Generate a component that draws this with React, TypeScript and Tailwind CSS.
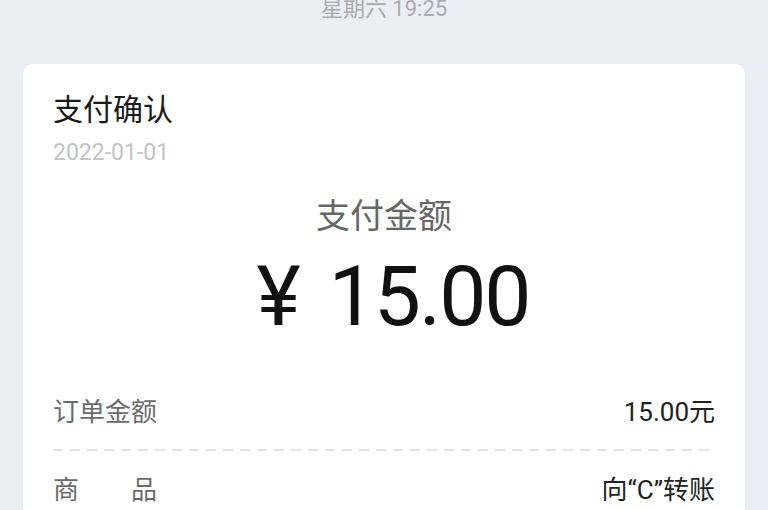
const cjk = '"Roboto", "Noto Sans CJK SC", sans-serif';

export default function App() {
  return (
    <div className="h-[510px] w-[768px] overflow-hidden bg-[#eceef5]" style={{ fontFamily: cjk }}>
      <div className="-mt-[4px] text-center text-[22px] leading-[26px] text-[#a9abb1]">星期六 19:25</div>
      <div className="mx-[23px] mt-[42px] rounded-[10px] bg-white px-[30px] pt-[26px] pb-[40px]">
        <h1 className="text-[30px] leading-[40px] text-[#1a1a1a]">支付确认</h1>
        <p className="mt-[8px] text-[23px] leading-[30px] text-[#c3c3c3]">2022-01-01</p>
        <div className="mt-[26px] text-center text-[34px] leading-[44px] text-[#666666]">支付金额</div>
        <div className="mt-[17px] flex justify-center pl-[18px] text-[84px] leading-[84px] text-[#111111]">
          <span>¥</span>
          <span className="ml-[28px] tracking-[-2px]">15.00</span>
        </div>
        <div className="mt-[55px] flex items-center justify-between text-[26px] leading-[36px]">
          <span className="text-[#6b6b6b]">订单金额</span>
          <span className="text-[#222222]">15.00元</span>
        </div>
        <div className="mt-[19px] h-[2px] bg-[repeating-linear-gradient(to_right,#e2e2e2_0_10px,transparent_10px_17px)]" />
        <div className="mt-[21px] flex items-center justify-between text-[26px] leading-[36px]">
          <span className="text-[#6b6b6b]">商<span className="inline-block w-[52px]" />品</span>
          <span className="text-[#222222]">向“C”转账</span>
        </div>
      </div>
    </div>
  );
}
